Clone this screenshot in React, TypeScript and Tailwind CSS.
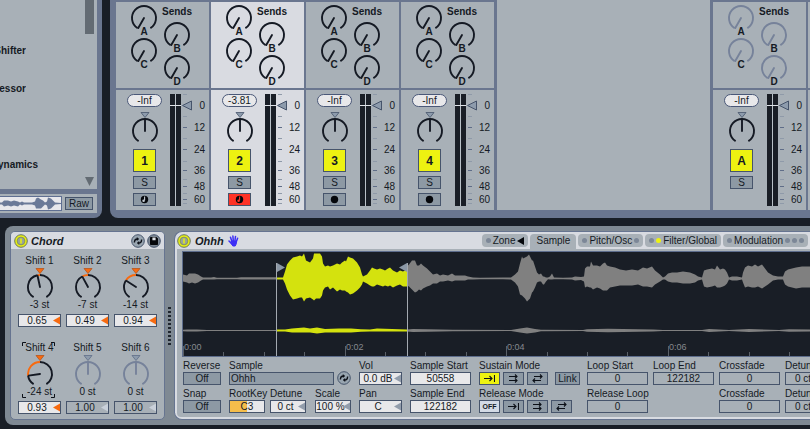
import { useState } from 'react';
import type { ReactNode } from 'react';
import clsx from 'clsx';

const INK = '#151a24';
const ORANGE = '#f76a10';

type Point = [number, number, number];

// x, height above the centre line, height below it
const WAVE_INTRO: Point[] = [
  [0, 4, 3], [4, 3, 4], [6, 5, 5], [9, 5, 4], [12, 5, 5], [15, 4, 4], [18, 2, 2], [20, 1, 1], [28, 1, 1], [31, 1.4, 1], [34, 0.7, 0.7],
  [54, 0.8, 0.7], [58, 1.3, 1], [94, 1.2, 1],
];

const WAVE_LOOP: Point[] = [
  [94, 1, 1], [100, 1, 1], [102, 7, 5], [104, 14, 11], [107, 18, 17], [110, 21, 21], [114, 22, 20], [117, 23, 19], [119, 22, 19],
  [121, 25, 23], [123, 18, 20], [127, 16, 19], [130, 20, 21], [131, 25, 22], [133, 25, 20], [137, 25, 20], [139, 22, 17], [140, 15, 12],
  [142, 12, 9], [145, 13, 8], [147, 12, 11], [150, 13, 9], [154, 15, 13], [157, 14, 11], [159, 16, 12], [162, 18, 12], [163, 17, 13],
  [165, 22, 14], [167, 21, 16], [170, 20, 15], [174, 16, 12], [177, 11, 9], [179, 4, 6], [180, 2, 3], [184, 4, 5], [187, 8, 7],
  [189, 11, 8], [191, 10, 8], [194, 9, 6], [197, 10, 7], [200, 9, 8], [202, 8, 7], [205, 10, 8], [207, 11, 7], [210, 8, 9], [214, 6, 7],
  [217, 8, 6], [220, 7, 8], [224, 9, 8],
];

const WAVE_TAIL: Point[] = [
  [224, 12, 7], [226, 14, 8], [229, 18, 11], [232, 18, 14], [234, 13, 13], [236, 13, 11], [238, 15, 12], [240, 13, 10], [244, 10, 8],
  [247, 7, 7], [250, 4, 5], [254, 5, 5], [257, 3, 3], [260, 4, 3], [265, 3, 2], [269, 5, 3], [272, 3, 2], [277, 3, 2], [282, 3, 2],
  [285, 2, 1], [290, 1, 1], [297, 0.7, 0.7], [320, 1, 0.8], [328, 1, 1], [332, 4, 4], [335, 7, 8], [337, 15, 16], [339, 22, 17],
  [340, 20, 18], [342, 21, 20], [344, 22, 23], [346, 24, 21], [347, 22, 20], [349, 18, 14], [350, 18, 13], [352, 12, 9], [354, 6, 4],
  [356, 4, 3], [358, 5, 3], [360, 2, 6], [361, 2, 6], [363, 1, 3], [365, 1, 0.7], [367, 2, 1], [369, 5, 1], [371, 1, 0.8], [380, 0.8, 0.7],
  [389, 1, 1], [392, 2, 2], [398, 1.5, 1.5], [401, 2, 3], [402, 10, 9], [404, 12, 8], [407, 12, 9], [408, 17, 9], [410, 13, 11],
  [414, 13, 9], [417, 12, 10], [420, 15, 12], [422, 16, 12], [424, 13, 12], [427, 12, 9], [432, 11, 8], [437, 9, 7], [443, 8, 7],
  [449, 9, 7], [455, 8, 6], [460, 11, 8], [464, 10, 8], [469, 12, 9], [472, 8, 6], [477, 4, 3], [480, 1, 1], [482, 2, 1], [485, 5, 3],
  [489, 6, 4], [494, 6, 4], [500, 7, 5], [507, 6, 5], [512, 4, 4], [515, 2, 2], [519, 1, 1], [521, 8, 8], [524, 9, 9], [529, 10, 8],
  [532, 9, 7], [534, 13, 9], [537, 9, 9], [540, 10, 8], [542, 9, 7], [544, 6, 5], [546, 1, 1], [549, 2, 2], [554, 2, 2], [559, 1, 1],
  [560, 6, 4], [562, 11, 9], [565, 13, 8], [569, 12, 9], [572, 14, 9], [575, 12, 8], [579, 14, 10], [582, 10, 8], [585, 6, 6],
  [590, 3, 2], [595, 2, 1], [600, 2, 1], [602, 7, 6], [605, 9, 8], [609, 10, 9], [613, 11, 10], [619, 12, 9], [630, 12, 9], [660, 11, 9],
];

const QUIET_INTRO: Point[] = [[0, 0.8, 0.8], [4, 1, 1], [14, 1, 1], [24, 0.5, 0.5], [94, 0.5, 0.5]];
const QUIET_LOOP: Point[] = [
  [94, 1, 1], [102, 1, 1], [109, 2, 2], [121, 3, 2], [127, 2, 2], [134, 3, 3], [142, 1.5, 2], [156, 2, 2], [168, 2, 2], [178, 1.3, 1.3],
  [187, 1, 1], [194, 2, 1], [224, 1, 1],
];
const QUIET_TAIL: Point[] = [
  [224, 1, 1], [230, 1.6, 1.6], [245, 1.3, 1.3], [270, 0.8, 0.8], [328, 0.6, 0.6], [337, 2, 2], [344, 3, 3], [352, 1.6, 2], [358, 0.7, 0.8],
  [400, 0.6, 0.6], [404, 1.3, 1.3], [425, 1.8, 1.8], [470, 1, 1], [480, 0.6, 0.6], [519, 0.6, 0.6], [526, 1.4, 1.4], [546, 0.6, 0.6],
  [566, 1.4, 1.4], [596, 0.6, 0.6], [606, 1.2, 1.2], [660, 1, 1],
];

const PREVIEW_WAVE: Point[] = [
  [0, 1, 1], [2, 1, 1], [4, 3, 3], [8, 3, 2], [11, 2, 3], [14, 3, 2], [18, 2, 3], [20, 1, 1], [22, 2, 2], [24, 1, 1], [28, 1, 1], [32, 1, 1],
  [35, 2, 2], [36, 5, 5], [38, 6, 5], [41, 4, 5], [43, 3, 3], [45, 1, 1], [47, 2, 2], [48, 6, 6], [51, 5, 5], [53, 3, 3], [55, 1, 1],
  [61, 0.5, 0.5],
];

function envelope(points: Point[], mid: number) {
  const top = points.map(([x, up]) => `${x},${mid - up}`);
  const bottom = points.map(([x, , down]) => `${x},${mid + down}`).reverse();
  return [...top, ...bottom].join(' ');
}

function polar(angle: number, radius: number) {
  const rad = (angle * Math.PI) / 180;
  return `${(14 + radius * Math.sin(rad)).toFixed(2)} ${(14 - radius * Math.cos(rad)).toFixed(2)}`;
}

function arc(from: number, to: number) {
  return `M${polar(from, 12)}A12 12 0 ${to - from > 180 ? 1 : 0} 1 ${polar(to, 12)}`;
}

interface KnobProps {
  name: string;
  angle: number;
  color?: string;
  tint?: boolean;
}

function Knob({ name, angle, color = INK, tint }: KnobProps) {
  const start = tint && angle < 0 ? 0 : -148;
  return (
    <span className="grid size-7">
      <svg viewBox="0 0 28 28" className="size-7 [grid-area:1/1]" fill="none" stroke={color} strokeWidth="1.9">
        {tint && angle < 0 && <path d={arc(-148, angle)} />}
        {tint && angle < 0 && <path d={arc(angle, 0)} stroke={ORANGE} />}
        <path d={arc(start, 148)} />
        <path d={`M14 14L${polar(angle, 11.5)}`} strokeLinecap="round" />
      </svg>
      <input
        type="range"
        aria-label={name}
        min={-150}
        max={150}
        defaultValue={angle}
        className="size-7 cursor-pointer opacity-0 [grid-area:1/1]"
      />
    </span>
  );
}

function CenterMark({ color = '#8d9bac', stroke = '#46546b' }: { color?: string; stroke?: string }) {
  return (
    <svg viewBox="0 0 10 6" className="h-1.5 w-2.5 shrink-0">
      <path d="M1 .5h8L5 5.5z" fill={color} stroke={stroke} strokeWidth=".8" />
    </svg>
  );
}

function SendKnob({ letter, muted }: { letter: string; muted?: boolean }) {
  return (
    <div className="flex h-[33px] flex-col items-center">
      <Knob name={`Send ${letter}`} angle={-150} color={muted ? '#76829a' : INK} />
      <span className="-mt-1.5 text-[10px] leading-3 font-bold">{letter}</span>
    </div>
  );
}

type Arm = 'midi' | 'audio' | 'none';

interface Track {
  id: string;
  volume: string;
  arm: Arm;
  armed?: boolean;
  selected?: boolean;
  mutedSends?: boolean;
}

const TRACKS: Track[] = [
  { id: '1', volume: '-Inf', arm: 'midi' },
  { id: '2', volume: '-3.81', arm: 'midi', armed: true, selected: true },
  { id: '3', volume: '-Inf', arm: 'audio' },
  { id: '4', volume: '-Inf', arm: 'audio' },
];

const RETURN_TRACK: Track = { id: 'A', volume: '-Inf', arm: 'none', mutedSends: true };

const SCALE = [
  { db: '0', row: 'h-[22px]' },
  { db: '12', row: 'h-[22px]' },
  { db: '24', row: 'h-[22px]' },
  { db: '36', row: 'h-5' },
  { db: '48', row: 'h-3' },
  { db: '60', row: 'h-3.5' },
];

function ArmIcon({ kind, armed }: { kind: Arm; armed?: boolean }) {
  return (
    <svg viewBox="0 0 9 9" className="size-[9px]">
      <circle cx="4.5" cy="4.5" r="3.7" fill="#05070b" />
      {kind === 'midi' && (
        <>
          <path d="M4.6 1.6v3.6" stroke={armed ? '#ff3226' : '#c3cad2'} strokeWidth="1.1" fill="none" />
          <circle cx="3.6" cy="5.7" r="1.3" fill={armed ? '#ff3226' : '#c3cad2'} />
        </>
      )}
    </svg>
  );
}

function Meter({ id }: { id: string }) {
  return (
    <div className="flex h-28">
      <div className="grid">
        <svg viewBox="0 0 23 112" className="h-28 w-[23px] [grid-area:1/1]">
          <path d="M0 0h5v112H0zM6 0h5v112H6z" fill="#191e26" />
          <path d="M5 0h1v112H5z" fill="#b9c1c8" />
          <path d="M0 11h11v1H0z" fill="#dfe3e8" />
          <path d="M13 0h4v1h-4zM13 22h4v1h-4zM13 44h4v1h-4zM13 67h4v1h-4zM13 85h4v1h-4zM13 99h4v1h-4zM13 109h4v1h-4z" fill="#8f9aa9" />
          <path d="M13 33h4v1h-4zM13 55h4v1h-4zM13 76h4v1h-4zM13 92h4v1h-4zM13 105h4v1h-4z" fill="#5f6d88" />
          <path d="M12.5 11.5L21.5 7v9z" fill="#8d9bac" stroke="#46546b" />
        </svg>
        <input
          type="range"
          aria-label={`Track ${id} volume`}
          defaultValue={85}
          className="h-28 w-[23px] opacity-0 [grid-area:1/1] [writing-mode:vertical-lr]"
        />
      </div>
      <div className="w-3 text-right text-[10px]">
        {SCALE.map((mark) => (
          <div key={mark.db} className={clsx('flex items-center justify-end', mark.row)}>
            {mark.db}
          </div>
        ))}
      </div>
    </div>
  );
}

function TrackStrip({ track }: { track: Track }) {
  const [active, setActive] = useState(true);
  const [solo, setSolo] = useState(false);
  const surface = track.selected ? 'bg-[#d9dbe1]' : 'bg-[#a8b0b7]';

  return (
    <section className="flex w-[93px] shrink-0 flex-col gap-0.5 pt-0.5" aria-label={`Track ${track.id}`}>
      <div className={clsx('flex h-[86px] gap-1 pt-0.5 pl-3.5', surface)}>
        <div>
          <SendKnob letter="A" muted={track.mutedSends} />
          <SendKnob letter="C" muted={track.mutedSends} />
        </div>
        <div className="flex flex-col items-center">
          <h3 className="mb-px h-4 text-[10px] leading-4 font-bold">Sends</h3>
          <SendKnob letter="B" muted={track.mutedSends} />
          <SendKnob letter="D" muted={track.mutedSends} />
        </div>
      </div>
      <div className={clsx('flex h-[120px] gap-2 pt-1 pl-[11px]', surface)}>
        <div className="flex w-[35px] flex-col items-center">
          <input
            aria-label={`Track ${track.id} level`}
            defaultValue={track.volume}
            className="h-[13px] w-full rounded-full border border-[#4a5878] bg-[#e8e8ea] text-center text-[10px] leading-[11px]"
          />
          <div className="mt-[5px] flex h-[37px] flex-col items-center">
            <CenterMark />
            <div className="-mt-px">
              <Knob name={`Track ${track.id} pan`} angle={0} />
            </div>
          </div>
          <button
            onClick={() => setActive(!active)}
            className={clsx(
              'size-[23px] shrink-0 border border-[#46546b] text-[12px] leading-5 font-bold',
              active ? 'bg-[#edf211]' : 'bg-[#8d99a4]',
            )}
          >
            {track.id}
          </button>
          <button
            onClick={() => setSolo(!solo)}
            className={clsx(
              'mt-1 h-[13px] w-[23px] shrink-0 border border-[#46546b] text-[10px] leading-[11px]',
              solo ? 'bg-[#5a9bf0]' : 'bg-[#8d99a4]',
            )}
          >
            S
          </button>
          {track.arm !== 'none' && (
            <button
              aria-label={`Arm track ${track.id}`}
              className={clsx(
                'mt-1 flex h-[13px] w-[23px] shrink-0 items-center justify-center border border-[#46546b]',
                track.armed ? 'bg-[#ff3226]' : 'bg-[#8d99a4]',
              )}
            >
              <ArmIcon kind={track.arm} armed={track.armed} />
            </button>
          )}
        </div>
        <Meter id={track.id} />
      </div>
    </section>
  );
}

function Browser() {
  return (
    <aside className="flex w-[102px] shrink-0 flex-col gap-[5px] rounded-br-lg bg-[#6a768f] pr-[5px] pb-[5px]">
      <div className="flex h-[189px] justify-between bg-[#a8b0b7] pr-[3px]">
        <ul className="pt-[45px] text-[10px] leading-3 font-bold whitespace-nowrap">
          <li className="flex h-[38px] w-[26px] justify-end overflow-hidden">Shifter</li>
          <li className="flex h-[76px] w-[26px] justify-end overflow-hidden">essor</li>
          <li className="flex w-[38px] justify-end overflow-hidden">ynamics</li>
        </ul>
        <div className="flex flex-col items-center justify-between pb-[3px]">
          <div className="h-[34px] w-[9px] bg-[#636b73]" />
          <svg viewBox="0 0 9 9" className="size-[9px]">
            <path d="M0 0h9L4.5 9z" fill="#636b73" />
          </svg>
        </div>
      </div>
      <div className="flex h-[19px] items-center gap-[3px] bg-[#a8b0b7] pr-1">
        <div className="h-[15px] flex-1 border border-l-0 border-[#5f6f92] bg-[#e8e8ec]">
          <svg viewBox="0 0 61 13" className="h-[13px] w-[61px]">
            <polygon points={envelope(PREVIEW_WAVE, 6.5)} fill="#6b7a98" />
          </svg>
        </div>
        <button className="h-[13px] w-7 border border-[#46546b] bg-[#8d99a4] text-[10px] leading-[11px]">Raw</button>
      </div>
    </aside>
  );
}

function PowerButton({ name }: { name: string }) {
  return (
    <button aria-label={`Toggle ${name}`} className="size-[14px] shrink-0">
      <svg viewBox="0 0 14 14">
        <circle cx="7" cy="7" r="6.3" fill="#e6ee14" stroke="#5d6b60" strokeWidth=".9" />
        <circle cx="7" cy="7" r="3.9" fill="#98a49c" stroke="#6f7d4c" strokeWidth=".6" />
        <path d="M7 4.6v4.8" stroke="#e6ee14" strokeWidth="1.6" />
      </svg>
    </button>
  );
}

function SwapButton() {
  return (
    <button aria-label="Hot-swap" className="size-[14px] shrink-0">
      <svg viewBox="0 0 14 14" fill="none">
        <circle cx="7" cy="7" r="6.3" fill="#98a5b0" stroke="#46546b" />
        <path d="M3.4 8.6c0-2.6 1-3.6 3-3.6M10.6 5.4c0 2.6-1 3.6-3 3.6" stroke="#0c1018" strokeWidth="1.4" />
        <path d="M5.8 2.9v4.2l2.4-2.1zM8.2 11.1V6.9L5.8 9z" fill="#0c1018" />
      </svg>
    </button>
  );
}

function SaveButton() {
  return (
    <button aria-label="Save preset" className="size-[14px] shrink-0">
      <svg viewBox="0 0 14 14">
        <circle cx="7" cy="7" r="6.3" fill="#7d8894" stroke="#46546b" />
        <path d="M3.5 3.5h6l1 1v6h-7z" fill="#05070b" stroke="#05070b" />
        <path d="M5.4 3.6h3.2v2.6H5.4z" fill="#dfe3e8" />
      </svg>
    </button>
  );
}

function HandIcon() {
  return (
    <svg viewBox="0 0 11 12" className="h-3 w-[11px]" fill="none" stroke="#3d2ff5" strokeWidth="1.5" strokeLinecap="round">
      <path d="M3.9 6.5L2.5 2.2M5.3 6L4.9 1M6.9 6l.6-4.6M8.2 7l1.4-3.8M4 9L1 6" />
      <path d="M3.6 6h4.8v2.6L7.2 11H4.8L3.4 8.7z" fill="#3d2ff5" strokeWidth="1" />
    </svg>
  );
}

interface BoxProps {
  name?: string;
  value: string;
  width?: string;
  tone?: 'light' | 'flat' | 'orange';
  arrow?: 'orange' | 'gray' | 'pale';
}

const ARROWS = { orange: '#f76a10', gray: '#929dab', pale: '#c9d0da' };

function ValueBox({ name, value, width = 'w-full', tone = 'light', arrow }: BoxProps) {
  return (
    <span className={clsx('relative block h-[13px]', width)}>
      <input
        aria-label={name}
        defaultValue={value}
        className={clsx(
          'block h-[13px] w-full rounded-none border border-[#46546b] text-center text-[10px] leading-[11px]',
          tone === 'light' && 'bg-[#e8e8ea]',
          tone === 'orange' && 'bg-[linear-gradient(90deg,#f5bd4b_50%,#e8e8ea_50%)]',
          arrow && 'pr-[5px]',
        )}
      />
      {arrow && (
        <svg viewBox="0 0 7 9" className="pointer-events-none absolute top-0.5 right-px h-[9px] w-[7px]">
          <path d="M7 .5v8L0 4.5z" fill={ARROWS[arrow]} />
        </svg>
      )}
    </span>
  );
}

interface Shift {
  id: number;
  semitones: number;
  gain: string;
  focused?: boolean;
}

const SHIFTS: Shift[] = [
  { id: 1, semitones: -3, gain: '0.65' },
  { id: 2, semitones: -7, gain: '0.49' },
  { id: 3, semitones: -14, gain: '0.94' },
  { id: 4, semitones: -24, gain: '0.93', focused: true },
  { id: 5, semitones: 0, gain: '1.00' },
  { id: 6, semitones: 0, gain: '1.00' },
];

function ShiftControl({ shift }: { shift: Shift }) {
  const on = shift.semitones !== 0;
  return (
    <div className="relative flex w-[43px] flex-col items-center text-[10px]">
      {shift.focused && (
        <svg viewBox="0 0 33 56" className="pointer-events-none absolute top-px left-1 h-14 w-[33px]" fill="none" stroke="#0c1018">
          <path d="M.5 4V.5H4M29 .5h3.5V4M32.5 52v3.5H29M4 55.5H.5V52" />
        </svg>
      )}
      <span className="h-3.5 leading-[13px]">Shift {shift.id}</span>
      <CenterMark color={on ? ORANGE : '#8d9bac'} stroke={on ? '#b5541c' : '#5f6d88'} />
      <div className="-mt-px">
        <Knob name={`Shift ${shift.id}`} angle={shift.semitones * 4.1} color={on ? INK : '#76829a'} tint />
      </div>
      <span className="-mt-[3px] mb-0.5 h-3.5 leading-[13px]">{shift.semitones} st</span>
      <ValueBox
        name={`Shift ${shift.id} gain`}
        value={shift.gain}
        tone={on ? 'light' : 'flat'}
        arrow={on ? 'orange' : 'pale'}
      />
    </div>
  );
}

function ChordDevice() {
  return (
    <section className="flex w-[155px] shrink-0 flex-col overflow-hidden rounded-[5px] border border-[#667490] bg-[#a8b0b7]">
      <header className="flex h-[17px] items-center gap-0.5 bg-[#d8dbe1] px-[3px]">
        <PowerButton name="Chord" />
        <h2 className="flex-1 pl-px text-[11px] leading-4 font-bold italic">Chord</h2>
        <SwapButton />
        <SaveButton />
      </header>
      <div className="grid grid-cols-3 gap-x-[5px] gap-y-3.5 px-[7px] pt-[5px] pb-[5px]">
        {SHIFTS.map((shift) => (
          <ShiftControl key={shift.id} shift={shift} />
        ))}
      </div>
    </section>
  );
}

function Dot({ on }: { on?: boolean }) {
  return <span className={clsx('size-[5px] shrink-0 rounded-full', on ? 'bg-[#edf211]' : 'bg-[#7c8797]')} />;
}

function TabButton({ active, children }: { active?: boolean; children: ReactNode }) {
  return (
    <button
      role="tab"
      aria-selected={!!active}
      className={clsx(
        'flex shrink-0 items-center gap-0.5 bg-[#a8b0b7] text-[10px] leading-3',
        active ? 'h-[15px] rounded-t px-1.5 pb-0.5' : 'h-[13px] rounded px-1',
      )}
    >
      {children}
    </button>
  );
}

const TICKS = Array.from({ length: 16 }, (_, i) => i);

function SampleDisplay() {
  return (
    <div className="h-[106px] border border-r-0 border-[#5d6d8c] bg-[#191e26]">
      <svg className="h-[104px] w-full" fill="#808080" role="img" aria-label="Sample waveform">
        <polygon points={envelope(WAVE_INTRO, 26.5)} />
        <polygon points={envelope(WAVE_LOOP, 26.5)} fill="#d4e20e" />
        <polygon points={envelope(WAVE_TAIL, 26.5)} />
        <polygon points={envelope(QUIET_INTRO, 78.5)} />
        <polygon points={envelope(QUIET_LOOP, 78.5)} fill="#d4e20e" />
        <polygon points={envelope(QUIET_TAIL, 78.5)} />
        {TICKS.map((i) => (
          <rect key={i} x={Math.round(i * 40.4)} y={i % 4 ? 100 : 94} width="1" height={i % 4 ? 4 : 10} fill="#5a6068" />
        ))}
        {TICKS.filter((i) => i % 4 === 0).map((i) => (
          <text key={i} x={Math.round(i * 40.4) + 1} y="98" fill="#85898e" className="text-[9px]">
            0:{String(i / 2).padStart(2, '0')}
          </text>
        ))}
        <path d="M93 11h1v93h-1zM224 11h1v93h-1z" fill="#a3a9b0" />
        <path d="M94 11v9l8-4.5zM224 11v9l-8-4.5z" fill="#8b98a6" />
      </svg>
    </div>
  );
}

function Field({ label, children }: { label: string; children: ReactNode }) {
  return (
    <label className="block whitespace-nowrap">
      <span className="block h-[13px] leading-[13px]">{label}</span>
      {children}
    </label>
  );
}

function SmallButton({ name, width = 'w-[21px]', tone = 'bg-[#8d99a4]', children }: {
  name?: string;
  width?: string;
  tone?: string;
  children: ReactNode;
}) {
  return (
    <button
      aria-label={name}
      className={clsx('flex h-[13px] shrink-0 items-center justify-center border border-[#46546b] leading-[11px]', width, tone)}
    >
      {children}
    </button>
  );
}

const MODE_PATHS = {
  once: 'M0 4.5h8M5.5 2L8 4.5 5.5 7M10.5 1v7',
  loop: 'M1 2.5h8M1 6.5h8M7 .5l2 2-2 2M7 4.5l2 2-2 2',
  pingpong: 'M2 2.5h8M8 .5l2 2-2 2M1 6.5h8M3 4.5l-2 2 2 2',
};

function ModeIcon({ mode }: { mode: keyof typeof MODE_PATHS }) {
  return (
    <svg viewBox="0 0 11 9" className="h-[9px] w-[11px]" fill="none" stroke="#0c1018" strokeWidth="1.1">
      <path d={MODE_PATHS[mode]} />
    </svg>
  );
}

function ModeRow({ label, children }: { label: string; children: ReactNode }) {
  return (
    <div role="group" aria-label={label} className="whitespace-nowrap">
      <span className="block h-[13px] leading-[13px]">{label}</span>
      <div className="flex gap-[3px]">{children}</div>
    </div>
  );
}

function SampleControls() {
  return (
    <div className="flex gap-2 overflow-hidden pt-0.5 pl-px text-[10px]">
      <div className="flex w-[38px] shrink-0 flex-col gap-0.5">
        <Field label="Reverse">
          <SmallButton width="w-[38px]">Off</SmallButton>
        </Field>
        <Field label="Snap">
          <SmallButton width="w-[38px]">Off</SmallButton>
        </Field>
      </div>
      <div className="flex w-[122px] shrink-0 flex-col gap-0.5">
        <div className="flex items-end justify-between">
          <Field label="Sample">
            <input
              defaultValue="Ohhh"
              className="block h-[13px] w-[105px] border border-[#46546b] bg-[#929da8] pl-px leading-[11px]"
            />
          </Field>
          <SwapButton />
        </div>
        <div className="flex">
          <div className="w-[41px]">
            <Field label="RootKey">
              <ValueBox value="C3" width="w-9" tone="orange" />
            </Field>
          </div>
          <div className="w-[45px]">
            <Field label="Detune">
              <ValueBox value="0 ct" width="w-9" arrow="gray" />
            </Field>
          </div>
          <Field label="Scale">
            <ValueBox value="100 %" width="w-9" arrow="gray" />
          </Field>
        </div>
      </div>
      <div className="flex w-[43px] shrink-0 flex-col gap-0.5">
        <Field label="Vol">
          <ValueBox value="0.0 dB" arrow="gray" />
        </Field>
        <Field label="Pan">
          <ValueBox value="C" arrow="gray" />
        </Field>
      </div>
      <div className="flex w-[61px] shrink-0 flex-col gap-0.5">
        <Field label="Sample Start">
          <ValueBox value="50558" />
        </Field>
        <Field label="Sample End">
          <ValueBox value="122182" />
        </Field>
      </div>
      <div className="flex w-[100px] shrink-0 flex-col gap-0.5">
        <ModeRow label="Sustain Mode">
          <SmallButton name="No loop" tone="bg-[#edf211]"><ModeIcon mode="once" /></SmallButton>
          <SmallButton name="Loop"><ModeIcon mode="loop" /></SmallButton>
          <SmallButton name="Back and forth loop"><ModeIcon mode="pingpong" /></SmallButton>
          <div className="pl-1">
            <SmallButton width="w-[25px]">Link</SmallButton>
          </div>
        </ModeRow>
        <ModeRow label="Release Mode">
          <SmallButton tone="bg-[#d3dae5]"><span className="text-[7px] font-bold">OFF</span></SmallButton>
          <SmallButton name="Release once"><ModeIcon mode="once" /></SmallButton>
          <SmallButton name="Release loop"><ModeIcon mode="loop" /></SmallButton>
          <SmallButton name="Release back and forth"><ModeIcon mode="pingpong" /></SmallButton>
        </ModeRow>
      </div>
      <div className="grid shrink-0 grid-cols-[repeat(4,61px)] gap-x-[5px] gap-y-0.5">
        <Field label="Loop Start"><ValueBox value="0" tone="flat" /></Field>
        <Field label="Loop End"><ValueBox value="122182" tone="flat" /></Field>
        <Field label="Crossfade"><ValueBox value="0" tone="flat" /></Field>
        <Field label="Detune"><ValueBox value="0 ct" width="w-9" tone="flat" /></Field>
        <Field label="Release Loop"><ValueBox value="0" tone="flat" /></Field>
        <span />
        <Field label="Crossfade"><ValueBox value="0" tone="flat" /></Field>
        <Field label="Detune"><ValueBox value="0 ct" width="w-9" tone="flat" /></Field>
      </div>
    </div>
  );
}

function SamplerDevice() {
  return (
    <section className="min-w-0 flex-1 overflow-hidden rounded-l-lg border border-r-0 border-[#667490] bg-[#d8dbe1] pb-0.5 pl-0.5">
      <header className="flex h-[17px] items-center">
        <PowerButton name="Ohhh" />
        <h2 className="px-1 text-[11px] leading-4 font-bold italic">Ohhh</h2>
        <HandIcon />
        <div role="tablist" className="ml-auto flex h-[15px] items-start gap-0.5 self-end pr-0.5">
          <TabButton>
            <Dot />
            Zone
            <svg viewBox="0 0 7 8" className="h-2 w-[7px]">
              <path d="M7 0v8L0 4z" fill="#05070b" />
            </svg>
          </TabButton>
          <TabButton active>Sample</TabButton>
          <TabButton>
            <Dot />
            Pitch/Osc
            <Dot />
          </TabButton>
          <TabButton>
            <Dot />
            <Dot on />
            Filter/Global
          </TabButton>
          <TabButton>
            <Dot />
            Modulation
            <Dot />
            <Dot />
            <Dot />
          </TabButton>
        </div>
      </header>
      <div className="rounded-bl bg-[#a8b0b7] pt-0.5 pb-1 pl-[5px]">
        <SampleDisplay />
        <SampleControls />
      </div>
    </section>
  );
}

export default function App() {
  return (
    <main className="flex min-h-screen flex-col gap-2 overflow-hidden bg-[#191e26] font-['Liberation_Sans',Arial,sans-serif] text-[#151a24]">
      <div className="flex gap-2">
        <Browser />
        <div className="flex min-w-0 flex-1 overflow-hidden rounded-bl-lg bg-[#6a768f] pb-2 pl-1.5">
          <div className="flex gap-0.5 pr-[3px]">
            {TRACKS.map((track) => (
              <TrackStrip key={track.id} track={track} />
            ))}
          </div>
          <div className="flex-1 bg-[#a8b0b7]" />
          <div className="flex gap-0.5 pl-[3px]">
            <TrackStrip track={RETURN_TRACK} />
            <div className="flex w-0.5 flex-col gap-0.5 pt-0.5">
              <div className="h-[86px] bg-[#a8b0b7]" />
              <div className="h-[120px] bg-[#a8b0b7]" />
            </div>
          </div>
        </div>
      </div>
      <div className="ml-[5px] flex rounded-l-lg bg-[#7f8993] py-[5px] pl-[5px]">
        <ChordDevice />
        <div className="flex w-[9px] shrink-0 flex-col items-center justify-center gap-0.5">
          {Array.from({ length: 10 }, (_, i) => (
            <span key={i} className="h-0.5 w-[3px] bg-[#20262f]" />
          ))}
        </div>
        <SamplerDevice />
      </div>
    </main>
  );
}
